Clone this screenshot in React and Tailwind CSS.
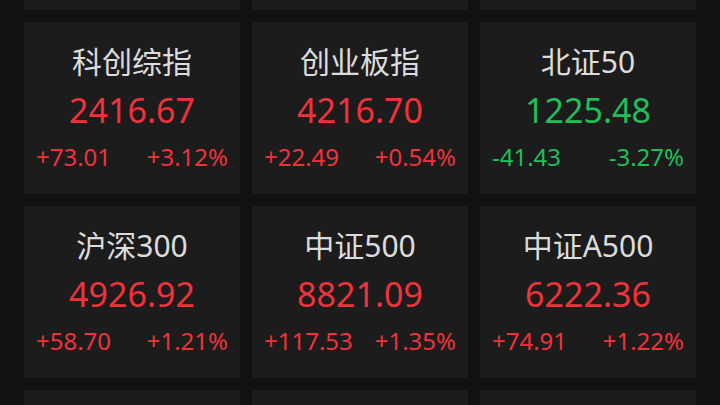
const indices = [
  null,
  null,
  null,
  { name: "科创综指", price: "2416.67", change: "+73.01", pct: "+3.12%" },
  { name: "创业板指", price: "4216.70", change: "+22.49", pct: "+0.54%" },
  { name: "北证50", price: "1225.48", change: "-41.43", pct: "-3.27%" },
  { name: "沪深300", price: "4926.92", change: "+58.70", pct: "+1.21%" },
  { name: "中证500", price: "8821.09", change: "+117.53", pct: "+1.35%" },
  { name: "中证A500", price: "6222.36", change: "+74.91", pct: "+1.22%" },
  null,
  null,
  null,
];

const IndexCard = ({ item }) => {
  if (!item) return <div className="h-[172px] bg-[#1c1c1c] rounded-[3px]" />;

  const down = item.change.startsWith("-");
  const tone = down ? "text-[#1fbf5a]" : "text-[#f0323a]";

  return (
    <div className="h-[172px] bg-[#1c1c1c] rounded-[3px] pt-[22px]">
      <div className="text-center text-[30px] leading-[36px] text-[#dcdcdc]">
        {item.name}
      </div>

      <div className={`mt-[10px] text-center text-[34px] leading-[40px] ${tone}`}>
        {item.price}
      </div>

      <div className={`mt-[12px] flex justify-between px-3 text-[24px] leading-[30px] ${tone}`}>
        <span>{item.change}</span>
        <span>{item.pct}</span>
      </div>
    </div>
  );
};

export default function App() {
  return (
    <div
      className="h-[405px] w-[720px] overflow-hidden bg-[#121212]"
      style={{ fontFamily: '"Noto Sans", "Noto Sans CJK SC", sans-serif' }}
    >
      {/* ================= INDEX GRID ================= */}
      <div className="-mt-[162px] grid grid-cols-3 gap-3 px-6">
        {indices.map((item, i) => (
          <IndexCard key={i} item={item} />
        ))}
      </div>
    </div>
  );
}
